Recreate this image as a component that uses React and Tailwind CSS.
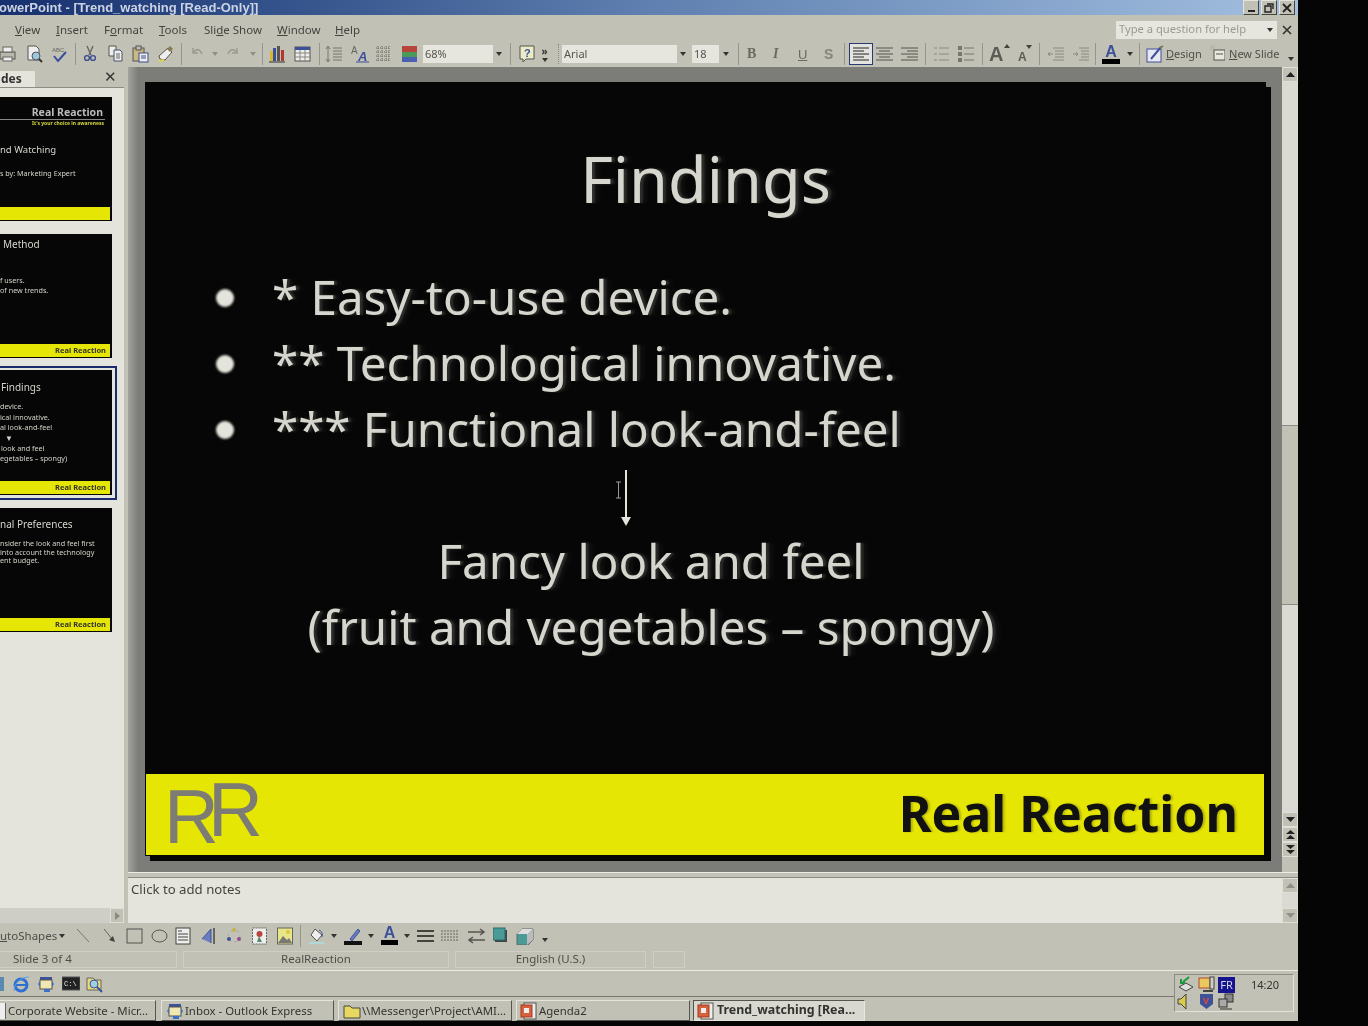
const ui = { fontFamily: '"Noto Sans", sans-serif' }

const Svg = ({ w = 18, h = 18, className = "", children }) => (
  <svg width={w} height={h} viewBox={`0 0 ${w} ${h}`} className={`shrink-0 ${className}`}>{children}</svg>
)
const Sep = ({ className = "" }) => <div className={`w-[1px] h-[22px] bg-[#96958c] shrink-0 ${className}`} />
const Drop = ({ className = "", color = "#333" }) => (
  <Svg w={6} h={4} className={className}><path d="M0 0h6L3 4z" fill={color} /></Svg>
)

function Combo({ className, text, arrowBox = "w-[12px]" }) {
  return (
    <div className={`h-[18px] bg-[#e6e6de] flex items-center justify-between shrink-0 text-[11px] text-[#55554f] ${className}`}>
      <span className="pl-[2px]">{text}</span>
      <div className={`h-full bg-[#c2c1b6] flex items-center justify-center ${arrowBox}`}><Drop /></div>
    </div>
  )
}

function TopToolbar() {
  return (
    <div className="h-[24px] pb-[2px] flex items-center shrink-0 text-[#4f4f49] overflow-hidden">
      <Svg className="-ml-[1px]"><rect x="1" y="7" width="15" height="7" fill="#b8b7ac" stroke="#55554f" /><rect x="4" y="2" width="9" height="5" fill="#eee" stroke="#66665f" /><rect x="4" y="12" width="9" height="4" fill="#eee" stroke="#66665f" /></Svg>
      <Svg w={19} className="ml-[8px]"><path d="M3 1h8l3 3v11H3z" fill="#eee" stroke="#55554f" /><circle cx="11" cy="11" r="4" fill="#9fc6d8" stroke="#4a5a60" /><path d="M14 14l3 3" stroke="#333" strokeWidth="2" /></Svg>
      <Svg className="ml-[6px]"><text x="2" y="7" fontSize="6" fill="#66665f" fontFamily="Liberation Sans">ABC</text><path d="M4 11l4 5 8-9" stroke="#3a4e9c" strokeWidth="2" fill="none" /></Svg>
      <Sep className="ml-[7px]" />
      <Svg className="ml-[5px]"><path d="M6 1l4 9M12 1L8 10" stroke="#66665f" strokeWidth="1.4" /><circle cx="6" cy="13" r="2.4" fill="none" stroke="#3c4c90" strokeWidth="1.4" /><circle cx="12" cy="13" r="2.4" fill="none" stroke="#3c4c90" strokeWidth="1.4" /></Svg>
      <Svg w={17} className="ml-[8px]"><path d="M2 1h7v10H2z" fill="#eee" stroke="#55554f" /><path d="M7 5h6l2 2v9H7z" fill="#eee" stroke="#44506c" /><path d="M9 9h4M9 11h4M9 13h4" stroke="#66665f" /></Svg>
      <Svg w={17} className="ml-[8px]"><rect x="1" y="3" width="11" height="13" fill="#c9b784" stroke="#55554f" /><rect x="4" y="1" width="5" height="4" fill="#bbb" stroke="#55554f" /><rect x="7" y="8" width="9" height="9" fill="#eee" stroke="#3c4c90" /><path d="M9 11h5M9 13h5" stroke="#3c4c90" /></Svg>
      <Svg className="ml-[8px]"><path d="M11 3l4 4-7 8-5-1-1-3z" fill="#eee" stroke="#55554f" /><path d="M13 1l3 3-3 3-3-3z" fill="#8a7a50" /><path d="M2 16l5-1" stroke="#d8d84a" strokeWidth="2" /></Svg>
      <Sep className="ml-[6px]" />
      <Svg w={13} className="ml-[8px]"><path d="M3 3v5h5M3 8c3-5 7-4 9 1" fill="none" stroke="#9a9a90" strokeWidth="1.4" /></Svg>
      <Drop className="ml-[9px]" color="#8f8f86" />
      <Svg w={13} className="ml-[9px]"><path d="M10 3v5H5M10 8C7 3 3 4 1 9" fill="none" stroke="#9a9a90" strokeWidth="1.4" /></Svg>
      <Drop className="ml-[10px]" color="#8f8f86" />
      <Sep className="ml-[6px]" />
      <Svg className="ml-[5px]"><rect x="2" y="6" width="3" height="10" fill="#d8b92a" /><rect x="5" y="3" width="3" height="13" fill="#3a4e9c" /><rect x="9" y="1" width="3" height="15" fill="#555" /><rect x="13" y="5" width="3" height="11" fill="#b8362e" /><path d="M1 17h16" stroke="#333" /></Svg>
      <Svg w={17} className="ml-[8px]"><rect x="1" y="2" width="15" height="14" fill="#eee" stroke="#55554f" /><rect x="1" y="2" width="15" height="3" fill="#3d5199" /><path d="M1 8h15M1 12h15M6 5v11M11 5v11" stroke="#88887f" /></Svg>
      <Sep className="ml-[8px]" />
      <Svg className="ml-[5px]"><path d="M3 1v16M1 4l2-3 2 3M1 14l2 3 2-3" stroke="#77776e" fill="none" /><path d="M8 3h9M8 6h9M8 9h9M8 12h9M8 15h9" stroke="#77776e" /></Svg>
      <Svg className="ml-[8px]"><text x="0" y="9" fontSize="10" fill="#66665f" fontFamily="Liberation Sans">A</text><text x="7" y="16" fontSize="13" fontWeight="700" fontStyle="italic" fill="#3d5199" fontFamily="Liberation Sans">A</text><path d="M5 17h13" stroke="#3d5199" /></Svg>
      <Svg w={16} className="ml-[6px]"><path d="M1 3h14M1 7h14M1 11h14M1 15h14M3 1v16M7 1v16M11 1v16M14 1v16" stroke="#66665f" strokeDasharray="1 1" /></Svg>
      <Svg w={15} className="ml-[11px]"><rect y="1" width="15" height="6" fill="#b8453c" /><rect y="7" width="15" height="5" fill="#4a9a5a" /><rect y="12" width="15" height="5" fill="#4b5fb0" /></Svg>
      <Combo className="ml-[6px] w-[82px]" text="68%" />
      <Sep className="ml-[5px]" />
      <Svg w={16} className="ml-[8px]"><path d="M1 1h14v13H7l-3 3v-3H1z" fill="#ecebc8" stroke="#55554f" /><text x="5" y="12" fontSize="11" fontWeight="700" fill="#3d5199" fontFamily="Liberation Sans">?</text></Svg>
      <div className="ml-[5px] w-[9px] flex flex-col items-center shrink-0 leading-none">
        <span className="text-[10px] font-bold text-[#333] leading-[10px]">»</span>
        <Drop className="mt-[2px]" />
      </div>
      <div className="ml-[9px] w-[2px] h-[20px] border-l border-dotted border-[#8a8a80] shrink-0" />
      <Combo className="ml-[2px] w-[127px]" text="Arial" />
      <Combo className="ml-[3px] w-[41px]" text="18" arrowBox="w-[14px]" />
      <Sep className="ml-[5px]" />
      <span className="ml-[8px] w-[11px] font-bold text-[14px] leading-none text-[#6a6a62]" style={{ fontFamily: "Liberation Serif" }}>B</span>
      <span className="ml-[15px] w-[10px] italic font-bold text-[14px] leading-none text-[#6a6a62]" style={{ fontFamily: "Liberation Serif" }}>I</span>
      <span className="ml-[15px] w-[10px] underline text-[13px] leading-none text-[#6a6a62]" style={{ fontFamily: "Liberation Sans" }}>U</span>
      <span className="ml-[16px] w-[11px] font-bold text-[14px] leading-none text-[#85857c]" style={{ fontFamily: "Liberation Sans" }}>S</span>
      <Sep className="ml-[9px]" />
      <div className="ml-[4px] w-[24px] h-[22px] bg-[#e3e3e0] border border-[#2a3a70] flex items-center justify-center shrink-0">
        <Svg w={16} h={14}><path d="M0 1h16M0 4h11M0 7h16M0 10h11M0 13h16" stroke="#222" /></Svg>
      </div>
      <Svg w={17} h={14} className="ml-[3px]"><path d="M0 1h17M3 4h11M0 7h17M3 10h11M0 13h17" stroke="#55554f" /></Svg>
      <Svg w={17} h={14} className="ml-[8px]"><path d="M0 1h17M6 4h11M0 7h17M6 10h11M0 13h17" stroke="#55554f" /></Svg>
      <Sep className="ml-[7px]" />
      <Svg w={16} className="ml-[7px]"><path d="M1 3h3M1 9h3M1 15h3M6 3h10M6 9h10M6 15h10" stroke="#8a8a80" /></Svg>
      <Svg w={16} className="ml-[9px]"><path d="M6 3h10M6 9h10M6 15h10" stroke="#77776e" /><rect x="0" y="1" width="4" height="4" fill="#77776e" /><rect x="0" y="7" width="4" height="4" fill="#77776e" /><rect x="0" y="13" width="4" height="4" fill="#77776e" /></Svg>
      <Sep className="ml-[8px]" />
      <div className="ml-[6px] w-[18px] relative shrink-0 text-[20px] font-bold leading-[20px] text-[#5c5c55]" style={{ fontFamily: "Liberation Sans" }}>
        A
        <Svg w={6} h={4} className="absolute right-[-3px] top-[0px]"><path d="M0 4h6L3 0z" fill="#44443f" /></Svg>
      </div>
      <div className="ml-[11px] w-[13px] relative shrink-0 text-[12px] font-bold leading-none pt-[5px] text-[#5c5c55]" style={{ fontFamily: "Liberation Sans" }}>
        A
        <Svg w={6} h={4} className="absolute right-[-1px] top-[-1px]"><path d="M0 0h6L3 4z" fill="#44443f" /></Svg>
      </div>
      <Sep className="ml-[8px]" />
      <Svg className="ml-[6px]"><path d="M7 3h11M9 6h9M9 9h9M9 12h9M7 15h11M2 9h5M4 7L2 9l2 2" stroke="#8a8a80" fill="none" /></Svg>
      <Svg w={17} className="ml-[8px]"><path d="M7 3h10M9 6h8M9 9h8M9 12h8M7 15h10M1 9h5M4 7l2 2-2 2" stroke="#8a8a80" fill="none" /></Svg>
      <Sep className="ml-[6px]" />
      <div className="ml-[6px] w-[18px] flex flex-col items-center shrink-0">
        <span className="text-[16px] leading-[15px] text-[#3d5199] font-bold" style={{ fontFamily: "Liberation Sans" }}>A</span>
        <div className="w-[18px] h-[5px] bg-black" />
      </div>
      <Drop className="ml-[7px]" />
      <Sep className="ml-[6px]" />
      <Svg className="ml-[6px]"><rect x="1" y="4" width="14" height="13" fill="#e8e8f4" stroke="#3d5199" /><path d="M5 14L15 2" stroke="#3d5199" strokeWidth="2" /><path d="M14 3l3-2" stroke="#8a7a50" strokeWidth="2" /></Svg>
      <span className="ml-[2px] w-[34px] text-[11px] shrink-0"><u>D</u>esign</span>
      <Svg w={15} className="ml-[10px]"><path d="M2 0v5M0 2.5h5M0 0l5 5M5 0L0 5" stroke="#b4b4aa" /><rect x="4" y="5" width="11" height="10" fill="#e8e8e0" stroke="#55554f" /><path d="M6 9h7" stroke="#55554f" /></Svg>
      <span className="ml-[4px] w-[50px] text-[11px] whitespace-nowrap shrink-0"><u>N</u>ew Slide</span>
      <Drop className="ml-[9px] mt-[10px]" />
    </div>
  )
}

function Thumb({ band = true, className = "", children }) {
  return (
    <div className={`w-[112px] h-[124px] bg-[#060606] flex flex-col text-[#d4d4cc] overflow-hidden whitespace-nowrap leading-none shrink-0 ${className}`}>
      <div className="flex-1 min-h-0">{children}</div>
      <div className="h-[13px] mb-[1px] mr-[2px] bg-[#e6e605] text-[7.5px] font-bold text-[#333] text-right pr-[4px] leading-[13px] shrink-0">{band ? "Real Reaction" : ""}</div>
    </div>
  )
}

function SlidesPanel() {
  return (
    <div className="w-[124px] flex flex-col bg-[#e4e4dc] shrink-0 overflow-hidden">
      <div className="h-[21px] flex items-end bg-[#c2c1b6] border-b border-[#8d8c84] shrink-0 relative">
        <div className="w-[35px] h-[16px] bg-[#e4e4dc] text-[12px] font-bold text-[#333] leading-[15px] pl-[1px]">des</div>
        <span className="ml-auto mr-[7px] mb-[3px] text-[15px] leading-none text-[#333]">✕</span>
      </div>
      <div className="flex-1 min-h-0 flex flex-col pt-[9px]">
        <Thumb band={false}>
          <div className="text-[10.5px] font-bold text-right pr-[9px] pt-[10px] text-[#bbb]">Real Reaction</div>
          <div className="h-[1px] bg-[#888] mt-[1px] mr-[7px]" />
          <div className="text-[5px] font-bold text-right pr-[8px] mt-[1px] text-[#d8d840]">It's your choice in awareness</div>
          <div className="text-[9.5px] mt-[19px]">nd Watching</div>
          <div className="text-[7.2px] mt-[16px]">s by: Marketing Expert</div>
        </Thumb>
        <Thumb className="mt-[13px]">
          <div className="text-[10px] pt-[5px] pl-[3px]">Method</div>
          <div className="text-[7.2px] mt-[28px]">f users.</div>
          <div className="text-[7.2px] mt-[3px]">of new trends.</div>
        </Thumb>
        <div className="w-[117px] mt-[8px] border-y-[2px] border-r-[2px] border-[#1a2a6c] pt-[2px] pb-[3px] shrink-0">
          <Thumb className="h-[125px]">
            <div className="text-[10px] pt-[12px] pl-[1px]">Findings</div>
            <div className="text-[7.2px] mt-[11px]">device.</div>
            <div className="text-[7.2px] mt-[4px]">ical innovative.</div>
            <div className="text-[7.2px] mt-[3px]">al look-and-feel</div>
            <div className="text-[8px] pl-[5px] mt-[1px] leading-[9px]">▼</div>
            <div className="text-[7.2px] mt-[3px] pl-[1px]">look and feel</div>
            <div className="text-[7.2px] mt-[3px]">egetables – spongy)</div>
          </Thumb>
        </div>
        <Thumb className="mt-[8px]">
          <div className="text-[10px] pt-[11px]">nal Preferences</div>
          <div className="text-[7.2px] mt-[11px]">nsider the look and feel first</div>
          <div className="text-[7.2px] mt-[2px]">into account the technology</div>
          <div className="text-[7.2px] mt-[1px]">ent budget.</div>
        </Thumb>
      </div>
      <div className="h-[15px] bg-[#cfcec6] flex justify-end shrink-0">
        <div className="w-[14px] h-[15px] bg-[#c2c1b6] border border-[#dededa] flex items-center justify-center">
          <Svg w={5} h={8}><path d="M0 0l5 4-5 4z" fill="#8a8a80" /></Svg>
        </div>
      </div>
    </div>
  )
}

const glow = "[text-shadow:3px_0_2px_rgba(210,210,200,0.18),7px_0_4px_rgba(210,210,200,0.06)]"

function Slide() {
  return (
    <div className="w-[1121px] h-[774px] bg-[#060606] shadow-[5px_5px_0_#050505] flex flex-col relative text-[#d6d6ce] whitespace-nowrap">
      <div className={`mt-[62px] h-[70px] text-center text-[63px] leading-[70px] ${glow}`}>Findings</div>
      <div className="mt-[50px] flex flex-col">
        {["* Easy-to-use device.", "** Technological innovative.", "*** Functional look-and-feel"].map((t) => (
          <div key={t} className="h-[66px] flex items-center">
            <div className="ml-[71px] w-[18px] h-[18px] rounded-full bg-[#e4e4dc] blur-[1px] shrink-0 mt-[2px]" />
            <div className={`ml-[38px] text-[47.5px] leading-none ${glow}`}>{t}</div>
          </div>
        ))}
      </div>
      <Svg w={12} h={56} className="ml-[475px] mt-[8px]"><path d="M6 0v50" stroke="#e4e4dc" strokeWidth="2" /><path d="M1 47h10l-5 9z" fill="#e4e4dc" /></Svg>
      <div className={`w-[1012px] mt-[2px] text-center text-[47.5px] leading-[66px] ${glow}`}>
        <div>Fancy look and feel</div>
        <div>(fruit and vegetables – spongy)</div>
      </div>
      <div className="mt-auto ml-[1px] mr-[2px] mb-[1px] h-[81px] bg-[#e6e605] flex items-center justify-between pr-[26px]">
        <div className="relative w-[120px] h-[81px] text-[#7c7c74] text-[76px] leading-none" style={{ fontFamily: "Liberation Sans" }}>
          <span className="absolute left-[18px] top-[5px]">R</span>
          <span className="absolute left-[62px] top-[-2px]">R</span>
        </div>
        <div className="text-[50px] font-bold text-[#111] -mt-[2px] [text-shadow:2px_0_2px_rgba(20,20,20,0.25)]">Real Reaction</div>
      </div>
      <Svg w={7} h={18} className="absolute left-[470px] top-[399px]"><path d="M1 1h5M3.5 1v16M1 17h5" stroke="#9a9a92" fill="none" /></Svg>
    </div>
  )
}

const ScrollBtn = ({ d, className = "", color = "#222" }) => (
  <div className={`h-[15px] bg-[#c2c1b6] border border-[#e0e0d8] flex items-center justify-center shrink-0 ${className}`}>
    <Svg w={9} h={9}><path d={d} fill={color} /></Svg>
  </div>
)

function MainScrollbar() {
  return (
    <div className="w-[16px] flex flex-col bg-[#c2c1b6] shrink-0">
      <ScrollBtn d="M0 7h9L4.5 2z" />
      <div className="h-[343px] bg-[#dadad2]" />
      <div className="h-[180px] bg-[#c2c1b6] border-y border-[#8d8c84]" />
      <div className="h-[207px] bg-[#dadad2]" />
      <ScrollBtn d="M0 2h9L4.5 7z" />
      <ScrollBtn d="M0 4h9L4.5 0zM0 9h9L4.5 5z" />
      <ScrollBtn d="M0 0h9L4.5 4zM0 5h9L4.5 9z" />
    </div>
  )
}

function DrawToolbar() {
  return (
    <div className="h-[25px] flex items-center text-[#4f4f49] shrink-0">
      <span className="text-[11.5px] w-[58px] whitespace-nowrap"><u>u</u>toShapes</span>
      <Drop className="ml-[1px]" />
      <Svg w={14} className="ml-[11px]"><path d="M1 2l12 13" stroke="#77776e" /></Svg>
      <Svg w={13} className="ml-[13px]"><path d="M1 2l9 11" stroke="#66665f" /><path d="M12 15l-6-2 4-4z" fill="#44443f" /></Svg>
      <Svg w={17} className="ml-[10px]"><rect x="1" y="2" width="15" height="14" fill="none" stroke="#55554f" /></Svg>
      <Svg w={17} className="ml-[8px]"><ellipse cx="8.5" cy="9" rx="7.5" ry="6" fill="none" stroke="#55554f" /></Svg>
      <Svg w={16} className="ml-[7px]"><rect x="1" y="1" width="14" height="16" fill="#eee" stroke="#44443f" /><path d="M3 4h4M3 7h10M3 10h10M3 13h10" stroke="#44443f" /></Svg>
      <Svg w={16} className="ml-[10px]"><path d="M1 12L10 2v14" fill="#6b7cc0" stroke="#3d5199" /><path d="M13 1v16" stroke="#66665f" strokeWidth="2" /></Svg>
      <Svg w={16} className="ml-[9px]"><circle cx="8" cy="9" r="6" fill="none" stroke="#aaa" strokeDasharray="3 3" /><circle cx="8" cy="3" r="2" fill="#c4b44a" /><circle cx="3" cy="12" r="2" fill="#3d5199" /><circle cx="13" cy="12" r="2" fill="#9a4a90" /></Svg>
      <Svg w={15} className="ml-[10px]"><rect x="0.5" y="1" width="14" height="16" fill="#eee" stroke="#66665f" strokeDasharray="2 1" /><circle cx="7.5" cy="7" r="3" fill="#b8453c" /><path d="M5 15l2-6 3 6z" fill="#5a8a6a" /></Svg>
      <Svg w={16} className="ml-[10px]"><rect x="0.5" y="1" width="15" height="16" fill="#e8e48a" stroke="#66665f" /><circle cx="11" cy="5" r="2" fill="#d8c83a" /><path d="M1 16l5-7 4 4 2-2 3 5z" fill="#777" /></Svg>
      <Sep className="ml-[7px]" />
      <Svg w={17} className="ml-[7px]"><path d="M7 2l7 6-5 6-6-6z" fill="#eee" stroke="#55554f" /><path d="M11 3c3 1 4 5 3 7" stroke="#3d5199" fill="none" /><path d="M1 16h15" stroke="#b0d8d8" strokeWidth="2" /></Svg>
      <Drop className="ml-[6px]" />
      <Svg className="ml-[7px]"><path d="M6 12l8-10 2 2-8 10z" fill="#6b7cc0" stroke="#3d5199" /><rect y="14" width="18" height="4" fill="#111" /></Svg>
      <Drop className="ml-[6px]" />
      <div className="ml-[7px] w-[17px] flex flex-col items-center shrink-0">
        <span className="text-[16px] leading-[14px] font-bold text-[#3d5199]" style={{ fontFamily: "Liberation Sans" }}>A</span>
        <div className="w-[17px] h-[5px] bg-black" />
      </div>
      <Drop className="ml-[6px]" />
      <Svg w={17} className="ml-[7px]"><path d="M0 4h17M0 9h17M0 14h17" stroke="#44443f" strokeWidth="2" /></Svg>
      <Svg className="ml-[7px]"><path d="M0 4h18M0 7h18M0 10h18M0 13h18" stroke="#66665f" strokeDasharray="2 1" /></Svg>
      <Svg w={17} className="ml-[9px]"><path d="M0 5h16M12 2l4 3-4 3M17 13H1M5 10l-4 3 4 3" stroke="#55554f" strokeWidth="1.5" fill="none" /></Svg>
      <Svg w={15} className="ml-[8px]"><rect x="2" y="3" width="12" height="12" fill="#444" /><rect x="0" y="1" width="12" height="12" fill="#4a9a98" stroke="#2a6a68" /></Svg>
      <Svg className="ml-[8px]"><path d="M1 7l5-5h11v11l-5 5H1z" fill="#4a9a98" stroke="#66665f" /><path d="M6 2h11l-5 5H1z" fill="#ddd" /><path d="M12 7h-1v11l6-5V2z" fill="#bbb" /></Svg>
      <Drop className="ml-[8px] mt-[8px]" />
    </div>
  )
}

function StatusBar() {
  const cell = "h-[17px] border border-[#d0cfc4] flex items-center shrink-0 text-[11.5px] text-[#4f4f49]"
  return (
    <div className="h-[23px] flex items-center shrink-0 border-b border-[#ecece4]">
      <div className={`${cell} w-[177px] pl-[13px] border-l-0`}>Slide 3 of 4</div>
      <div className={`${cell} w-[266px] ml-[6px] justify-center`}>RealReaction</div>
      <div className={`${cell} w-[191px] ml-[6px] justify-center`}>English (U.S.)</div>
      <div className={`${cell} w-[32px] ml-[7px]`} />
    </div>
  )
}

const PptIcon = ({ className = "" }) => (
  <Svg w={17} className={className}><rect x="4" y="1" width="12" height="16" fill="#eee" stroke="#55554f" /><rect x="1" y="3" width="11" height="12" fill="#d8603c" stroke="#a03a1c" /><rect x="4" y="6" width="5" height="5" fill="#eee" /></Svg>
)
const MailIcon = ({ className = "" }) => (
  <Svg className={className}><path d="M3 2h12v3H3z" fill="#3d5199" /><rect x="3" y="5" width="12" height="9" fill="#f0e8b0" stroke="#55554f" /><path d="M1 9l2-3v6zM17 9l-2 3V6z" fill="#3d70c0" /><rect x="7" y="14" width="6" height="3" fill="#3d70c0" /></Svg>
)
const Task = ({ className = "", icon, children, active = false }) => (
  <div className={`h-[21px] flex items-center shrink-0 overflow-hidden whitespace-nowrap text-[#33332f] ${active ? "text-[12.4px] bg-[#d8d8d0] border border-[#e8e8e0] border-t-[#55554f] border-l-[#55554f] font-bold" : "text-[11.4px] bg-[#c2c1b6] border border-[#e4e4dc] border-r-[#55554f] border-b-[#55554f]"} ${className}`}>
    {icon}
    {children}
  </div>
)

function Tray() {
  return (
    <div className="absolute right-[4px] top-[3px] w-[120px] h-[38px] bg-[#c2c1b6] border border-[#8d8c84] border-r-[#e4e4dc] border-b-[#e4e4dc] flex flex-col justify-center pl-[2px] text-[#33332f]">
      <div className="flex items-center h-[17px]">
        <Svg w={19} h={17}><path d="M2 11l7-4 7 4-7 4z" fill="#ddd" stroke="#44443f" /><path d="M12 1L6 6M4 3v4h4" stroke="#1a9a3a" strokeWidth="2" fill="none" /></Svg>
        <Svg w={17} h={17} className="ml-[2px]"><rect x="1" y="2" width="11" height="10" fill="#eac860" stroke="#b04a2c" /><rect x="12" y="1" width="4" height="12" fill="#ccc" stroke="#44443f" /><path d="M5 15h10" stroke="#44443f" strokeWidth="2" /></Svg>
        <div className="ml-[3px] w-[17px] h-[16px] bg-[#14148c] text-[#d8d8f0] text-[11px] leading-[16px] text-center">FR</div>
        <span className="ml-[16px] text-[11px] leading-none">14:20</span>
      </div>
      <div className="flex items-center h-[17px]">
        <Svg w={19} h={17}><path d="M1 6h3l5-5v15l-5-5H1z" fill="#d8cc50" stroke="#44443f" /><path d="M12 8h5M12 4l3-2M12 12l3 2" stroke="#bbb" /></Svg>
        <Svg w={13} h={17} className="ml-[4px]"><path d="M0 1h13v10l-6.5 5L0 11z" fill="#3d5199" /><text x="3" y="11" fontSize="9" fontWeight="700" fill="#e8483c" fontFamily="Liberation Sans">V</text></Svg>
        <Svg w={17} h={17} className="ml-[5px]"><rect x="7" y="1" width="8" height="8" fill="#888" stroke="#33332f" /><rect x="1" y="6" width="8" height="8" fill="#aaa" stroke="#33332f" /><path d="M2 16h12" stroke="#33332f" /></Svg>
      </div>
    </div>
  )
}

export default function App() {
  return (
    <div className="w-[1368px] h-[1026px] overflow-hidden bg-[#050505] flex blur-[0.4px]" style={ui}>
      <div className="w-[1298px] h-[1026px] flex flex-col bg-[#c2c1b6] shrink-0">
        {/* title bar */}
        <div className="h-[15px] flex items-center bg-gradient-to-r from-[#17306f] via-[#5f80b0] to-[#a3bfe0] shrink-0 overflow-hidden">
          <span className="-ml-[1px] text-[13px] font-bold text-[#ccd3e4] whitespace-nowrap" style={{ fontFamily: "Liberation Sans" }}>owerPoint - [Trend_watching [Read-Only]]</span>
          <div className="ml-auto mr-[3px] flex gap-[2px] text-[#222]">
            {["min", "max", "close"].map((b) => (
              <div key={b} className="w-[16px] h-[15px] bg-[#c2c1b6] border border-[#e4e4dc] border-r-[#44443f] border-b-[#44443f] flex items-center justify-center">
                {b === "min" && <div className="w-[7px] h-[2px] bg-[#222] mt-[7px]" />}
                {b === "max" && <Svg w={10} h={10}><path d="M3 1h6v5M1 3h6v6H1z" fill="none" stroke="#222" strokeWidth="1.4" /></Svg>}
                {b === "close" && <Svg w={10} h={10}><path d="M1 1l8 8M9 1L1 9" stroke="#222" strokeWidth="1.8" /></Svg>}
              </div>
            ))}
          </div>
        </div>
        {/* menu bar */}
        <div className="h-[28px] pt-[1px] flex items-center shrink-0 text-[11.5px] text-[#44443f] whitespace-nowrap">
          <span className="ml-[15px] w-[24px]"><u>V</u>iew</span>
          <span className="ml-[17px] w-[32px]"><u>I</u>nsert</span>
          <span className="ml-[16px] w-[38px]">F<u>o</u>rmat</span>
          <span className="ml-[17px] w-[28px]"><u>T</u>ools</span>
          <span className="ml-[17px] w-[56px]">Sli<u>d</u>e Show</span>
          <span className="ml-[17px] w-[41px]"><u>W</u>indow</span>
          <span className="ml-[17px] w-[23px]"><u>H</u>elp</span>
          <div className="ml-auto w-[161px] h-[18px] bg-[#e6e6de] flex items-center justify-between text-[11.2px] text-[#9a9a92] pl-[3px] pr-[4px]">
            <span>Type a question for help</span>
            <Drop />
          </div>
          <Svg w={10} h={10} className="ml-[5px] mr-[6px]"><path d="M1 1l8 8M9 1L1 9" stroke="#33332f" strokeWidth="1.6" /></Svg>
        </div>
        <TopToolbar />
        {/* work area */}
        <div className="h-[856px] flex shrink-0">
          <SlidesPanel />
          <div className="w-[4px] bg-[#c2c1b6] shrink-0" />
          <div className="flex-1 flex flex-col min-w-0">
            <div className="h-[805px] flex shrink-0">
              <div className="flex-1 bg-[linear-gradient(90deg,#a4a49e,#7c7c78_10px)] pl-[17px] pt-[15px] min-w-0">
                <Slide />
              </div>
              <MainScrollbar />
            </div>
            <div className="h-[6px] border-y border-[#ecece4] border-b-[#8d8c84] shrink-0" />
            <div className="flex-1 flex min-h-0 bg-[#e4e4dc]">
              <div className="flex-1 text-[13.2px] text-[#44443f] pl-[3px] pt-[2px]">Click to add notes</div>
              <div className="w-[16px] flex flex-col bg-[#dadad2]">
                <ScrollBtn d="M0 7h9L4.5 2z" color="#8f8f86" />
                <div className="flex-1" />
                <ScrollBtn d="M0 2h9L4.5 7z" color="#8f8f86" />
              </div>
            </div>
          </div>
        </div>
        <DrawToolbar />
        <StatusBar />
        {/* quick launch + taskbar */}
        <div className="h-[50px] relative shrink-0 flex flex-col">
          <div className="h-[26px] flex items-center border-b border-[#77776e] mr-[124px] shrink-0">
            <Svg w={4} h={18}><rect x="-8" y="2" width="12" height="14" fill="#5a8ab0" /></Svg>
            <Svg className="ml-[8px]"><circle cx="9" cy="10" r="6" fill="none" stroke="#2f6fd0" strokeWidth="3" /><path d="M4 10h10" stroke="#2f6fd0" strokeWidth="2" /><path d="M2 16C2 8 9 2 17 2" stroke="#5aa0e8" fill="none" /></Svg>
            <MailIcon className="ml-[7px]" />
            <Svg className="ml-[7px]"><rect y="2" width="18" height="13" fill="#222" stroke="#555" /><text x="2" y="11" fontSize="7" fill="#eee" fontFamily="Liberation Mono">C:\</text></Svg>
            <Svg w={17} className="ml-[6px]"><path d="M1 3h6l2 2h6v10H1z" fill="#e8d880" stroke="#66665f" /><circle cx="8" cy="9" r="4" fill="#9fd0e0" stroke="#3d5199" /><path d="M11 12l5 5" stroke="#3d5199" strokeWidth="2" /></Svg>
          </div>
          <div className="h-[24px] flex items-end shrink-0">
            <Task className="-ml-[1px] w-[157px]" icon={<div className="w-[6px] h-[16px] bg-[#eee] border-r border-[#66665f] mr-[2px] shrink-0" />}>Corporate Website - Micr...</Task>
            <Task className="ml-[5px] w-[173px] pl-[4px]" icon={<MailIcon className="mr-[1px]" />}>Inbox - Outlook Express</Task>
            <Task className="ml-[4px] w-[174px] pl-[4px]" icon={<Svg className="mr-[1px]"><path d="M1 4h6l2 2h8v10H1z" fill="#e8d860" stroke="#44443f" /></Svg>}>\\Messenger\Project\AMI...</Task>
            <Task className="ml-[4px] w-[174px] pl-[3px]" icon={<PptIcon className="mr-[2px]" />}>Agenda2</Task>
            <Task active className="ml-[3px] w-[172px] pl-[3px]" icon={<PptIcon className="mr-[3px]" />}>Trend_watching [Rea...</Task>
          </div>
          <Tray />
        </div>
        <div className="flex-1 bg-[#050505]" />
      </div>
    </div>
  )
}
